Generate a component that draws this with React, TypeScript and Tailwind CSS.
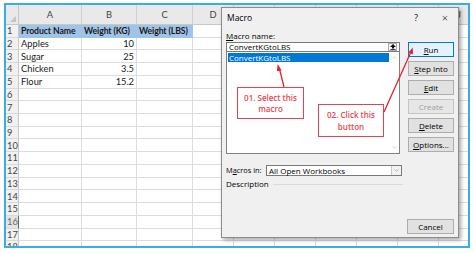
import { ChevronDown, ChevronUp } from "lucide-react";

const gridCols = "grid grid-cols-[13px_63px_55px_56px_41px_41px_41px_41px_41px_41px_41px]";
const letters = ["A", "B", "C", "D", "E", "F", "G", "H", "I", "J"];

const data: string[][] = [
  ["Product Name", "Weight (KG)", "Weight (LBS)"],
  ["Apples", "10", ""],
  ["Sugar", "25", ""],
  ["Chicken", "3.5", ""],
  ["Flour", "15.2", ""],
];

function Sheet() {
  const rows = Array.from({ length: 18 }, (_, i) => i + 1);
  return (
    <div className="font-['Lato',sans-serif] text-[9.3px] text-[#222]">
      {/* column headers */}
      <div className={`${gridCols} h-[20px] bg-[#e9e9e9] border-b border-[#c8c8c8]`}>
        <div className="relative border-r border-[#c8c8c8]">
          <div className="absolute right-[2px] bottom-[2px] w-0 h-0 border-l-[6px] border-l-transparent border-b-[6px] border-b-[#c4c4c4]" />
        </div>
        {letters.map((l) => (
          <div key={l} className="flex items-center justify-center border-r border-[#d0d0d0] text-[#444]">
            {l}
          </div>
        ))}
      </div>
      {rows.map((r) => {
        const row = data[r - 1];
        return (
          <div key={r} className={`${gridCols} h-[12.73px]`}>
            <div
              className={`flex items-center pl-[1px] leading-none border-b border-[#d8d8d8] ${
                r === 16 ? "bg-[#e4e4e4] border-r-[1.5px] border-r-[#4d7560] text-[#666]" : "bg-[#f1f1f1] border-r border-r-[#c8c8c8] text-[#444]"
              }`}
            >
              {r}
            </div>
            {letters.map((l, ci) => {
              const val = row && ci < 3 ? row[ci] : "";
              const header = r === 1 && ci < 3;
              return (
                <div
                  key={l}
                  className={`flex items-center leading-none whitespace-nowrap overflow-hidden border-b border-r ${
                    header
                      ? "bg-[#9fc4e7] border-[#9fc4e7] font-bold text-[#1a1a1a] text-[8.7px] tracking-[-0.1px] px-[2px]"
                      : "border-[#dcdcdc]"
                  } ${!header && ci === 1 ? "justify-end pr-[2px]" : "pl-[2px]"}`}
                >
                  {val}
                </div>
              );
            })}
          </div>
        );
      })}
    </div>
  );
}

function Btn({
  children,
  primary,
  disabled,
}: {
  children: React.ReactNode;
  primary?: boolean;
  disabled?: boolean;
}) {
  return (
    <div
      className={`h-[15px] flex items-center justify-center border leading-none ${
        primary
          ? "bg-[#e5f1fb] border-[#0078d7] text-black"
          : disabled
          ? "bg-[#e6e6e6] border-[#c4c4c4] text-[#a0a0a0]"
          : "bg-[#e1e1e1] border-[#adadad] text-black"
      }`}
    >
      {children}
    </div>
  );
}

function Callout({ lines, className }: { lines: string[]; className: string }) {
  return (
    <div
      className={`absolute flex flex-col items-center justify-center bg-white border border-[#e0454c] text-[#e8464f] font-semibold text-[8px] leading-[11.5px] ${className}`}
    >
      {lines.map((l) => (
        <span key={l}>{l}</span>
      ))}
    </div>
  );
}

function MacroDialog() {
  return (
    <div className="absolute left-[215px] top-[2px] w-[238px] h-[231px] bg-[#f0f0f0] border border-[#8c8c8c] shadow-[2px_2px_4px_rgba(0,0,0,0.35)] font-['Open_Sans',sans-serif] text-[8px] text-black">
      {/* title bar */}
      <div className="h-[21px] flex items-center pl-[5px] text-[8.5px]">
        <span>Macro</span>
        <span className="ml-auto w-[12px] text-center">?</span>
        <span className="ml-[17px] mr-[7px] w-[12px] text-center text-[11px] font-light">×</span>
      </div>

      <div className="px-[4px]">
        <div className="mt-[2px] h-[10px] leading-[10px] mb-[1px]">
          <span className="underline">M</span>acro name:
        </div>

        <div className="flex gap-[8px]">
          <div className="w-[174px]">
            {/* name input */}
            <div className="h-[10px] bg-white border border-[#7a7a7a] flex items-center pl-[2px] leading-none">
              <span>ConvertKGtoLBS</span>
              <div className="ml-auto mr-[2px] w-[9px] h-[8px] border border-[#adadad] bg-[#f3f3f3] flex items-center justify-center">
                <svg width="6" height="6" viewBox="0 0 6 6">
                  <path d="M3 0 L6 3 L4 3 L4 4.6 L2 4.6 L2 3 L0 3 Z" fill="#111" />
                  <rect x="0.5" y="5.2" width="5" height="0.8" fill="#111" />
                </svg>
              </div>
            </div>
            {/* list */}
            <div className="h-[102px] bg-white border border-t-0 border-[#828282] flex">
              <div className="flex-1 pt-[1px] pl-[1px]">
                <div className="h-[9px] bg-[#0078d7] text-white flex items-center pl-[1px] leading-none">
                  ConvertKGtoLBS
                </div>
              </div>
              <div className="w-[10px] flex flex-col items-center justify-between py-[2px] text-[#b5b5b5]">
                <ChevronUp size={7} strokeWidth={2} />
                <ChevronDown size={7} strokeWidth={2} />
              </div>
            </div>
          </div>

          <div className="w-[46px] flex flex-col gap-[4px]">
            <Btn primary>
              <span className="underline">R</span>un
            </Btn>
            <Btn>
              <span className="underline">S</span>tep Into
            </Btn>
            <Btn>
              <span className="underline">E</span>dit
            </Btn>
            <Btn disabled>Create</Btn>
            <Btn>
              <span className="underline">D</span>elete
            </Btn>
            <Btn>
              <span className="underline">O</span>ptions...
            </Btn>
          </div>
        </div>

        {/* macros in */}
        <div className="mt-[11px] flex items-center h-[11px]">
          <span className="w-[40px] shrink-0 leading-none whitespace-nowrap text-[7.4px]">
            M<span className="underline">a</span>cros in:
          </span>
          <div className="w-[136px] shrink-0 h-[11px] bg-white border border-[#7a7a7a] flex items-center pl-[2px] leading-none">
            <span>All Open Workbooks</span>
            <div className="ml-auto h-full w-[10px] border-l border-[#c8c8c8] bg-[#f2f2f2] flex items-center justify-center text-[#8a8a8a]">
              <ChevronDown size={7} strokeWidth={2} />
            </div>
          </div>
        </div>

        <div className="mt-[3px] h-[10px] flex items-center leading-none">
          <span>Description</span>
          <div className="ml-[4px] w-[130px] h-px bg-[#dadada]" />
        </div>

        <div className="mt-[30px] flex justify-end">
          <div className="w-[47px] h-[15px] flex items-center justify-center border border-[#adadad] bg-[#e1e1e1] leading-none">
            Cancel
          </div>
        </div>
      </div>

      {/* annotations */}
      <Callout lines={["01. Select this", "macro"]} className="left-[15px] top-[79px] w-[67px] h-[32px]" />
      <Callout lines={["02. Click this", "button"]} className="left-[96px] top-[96px] w-[66px] h-[33px]" />
      <svg className="absolute left-0 top-0 pointer-events-none" width="238" height="231" viewBox="0 0 238 231">
        <line x1="62" y1="79" x2="57.5" y2="61" stroke="#e0232b" strokeWidth="1.3" />
        <path d="M55.7 56 L59.6 62.2 L54.9 63.3 Z" fill="#e0232b" />
        <line x1="162" y1="104" x2="188.7" y2="44.5" stroke="#e0232b" strokeWidth="1.3" />
        <path d="M190.8 39.6 L190.9 46.6 L186.4 44.6 Z" fill="#e0232b" />
      </svg>
    </div>
  );
}

export default function App() {
  return (
    <div className="w-[474px] h-[253px] bg-white pt-[3px] pl-[4px]">
      <div className="relative w-[466px] h-[245px] border-2 border-[#3aaee2] overflow-hidden bg-white">
        <Sheet />
        <MacroDialog />
      </div>
    </div>
  );
}
